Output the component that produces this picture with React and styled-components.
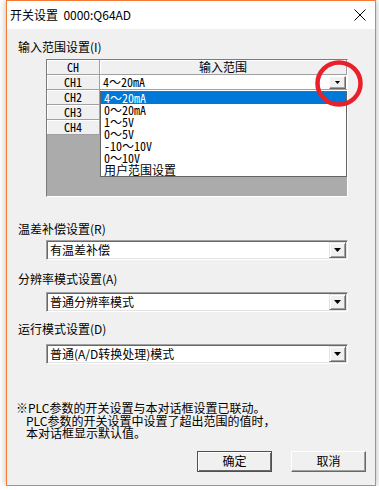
import styled, { createGlobalStyle } from 'styled-components';

const GlobalStyle = createGlobalStyle`
  html, body {
    margin: 0;
    padding: 0;
    background: #ffffff;
  }
  body {
    font-family: 'Noto Sans CJK SC', 'Noto Sans', sans-serif;
    font-size: 12px;
    color: #000;
  }
  * { box-sizing: border-box; }
`;

const Window = styled.div`
  width: 370px;
  height: 486px;
  margin-left: 6px;
  border: 1px solid #f47a35;
  background: #f0f0f0;
  box-shadow: 0 0 7px rgba(0, 0, 0, 0.3);
  display: flex;
  flex-direction: column;
`;

const TitleBar = styled.div`
  height: 28px;
  flex: none;
  background: #ffffff;
  display: flex;
  align-items: center;
  justify-content: space-between;
  padding: 0 9px 0 3px;
`;

const Title = styled.span`
  font-size: 12px;
  line-height: 14px;
  white-space: pre;
`;

const Content = styled.div`
  flex: 1;
  display: flex;
  flex-direction: column;
  padding: 11px 9px 0 11px;
`;

const Label = styled.div`
  font-size: 12px;
  line-height: 14px;
  height: 14px;
  margin-top: ${(p) => p.$mt || 0}px;
  white-space: nowrap;
`;

const GridBox = styled.div`
  position: relative;
  margin: 5px 0 0 28px;
  width: 302px;
  height: 138px;
  border: 1px solid;
  border-color: #7a7a7a #ffffff #ffffff #7a7a7a;
  background: #ababab;
  display: grid;
  grid-template-columns: 53px 247px;
  grid-auto-rows: 15px;
  align-content: start;
  font-family: 'Noto Sans Mono CJK SC', 'Noto Sans CJK SC', monospace;
  font-size: 12px;
`;

const HeadCell = styled.div`
  background: #f0f0f0;
  border-right: 1px solid #a0a0a0;
  border-bottom: 1px solid #a0a0a0;
  box-shadow: inset 1px 1px 0 #ffffff;
  display: flex;
  align-items: center;
  justify-content: center;
  line-height: 14px;
  white-space: nowrap;
`;

const ValueCell = styled.div`
  background: #ffffff;
  border-bottom: 1px solid #a0a0a0;
  display: flex;
  align-items: center;
  padding-left: 3px;
  line-height: 14px;
  white-space: nowrap;
`;

const CellText = styled.span`
  flex: 1;
`;

const SmallDrop = styled.div`
  width: 17px;
  height: 13px;
  margin-right: 1px;
  background: #f0f0f0;
  border: 1px solid;
  border-color: #ffffff #696969 #696969 #ffffff;
  box-shadow: inset -1px -1px 0 #a0a0a0;
  display: flex;
  align-items: center;
  justify-content: center;
`;

const DropList = styled.div`
  position: absolute;
  left: 53px;
  top: 31px;
  width: 247px;
  height: 86px;
  background: #ffffff;
  border: 1px solid #646464;
  display: flex;
  flex-direction: column;
`;

const DropItem = styled.div`
  height: 12px;
  line-height: 12px;
  padding-left: 3px;
  white-space: nowrap;
  background: ${(p) => (p.$active ? '#0078d7' : 'transparent')};
  color: ${(p) => (p.$active ? '#ffffff' : '#000000')};
`;

const Marker = styled.svg`
  position: absolute;
  left: 268px;
  top: 0px;
  pointer-events: none;
`;

const Combo = styled.div`
  margin: ${(p) => p.$mt || 0}px 0 0 28px;
  width: 302px;
  height: 20px;
  background: #ffffff;
  border: 1px solid;
  border-color: #a0a0a0 #ffffff #ffffff #a0a0a0;
  box-shadow: inset 1px 1px 0 #696969, inset -1px -1px 0 #e3e3e3;
  display: flex;
  align-items: center;
  padding: 0 1px 0 3px;
`;

const ComboText = styled.span`
  flex: 1;
  font-size: 12px;
  line-height: 14px;
  white-space: nowrap;
`;

const ArrowButton = styled.div`
  width: 17px;
  height: 16px;
  background: #f0f0f0;
  border: 1px solid;
  border-color: #e3e3e3 #696969 #696969 #e3e3e3;
  box-shadow: inset 1px 1px 0 #ffffff, inset -1px -1px 0 #a0a0a0;
  display: flex;
  align-items: center;
  justify-content: center;
`;

const Note = styled.div`
  margin-top: 38px;
  margin-left: -2px;
  font-size: 12px;
  line-height: 12.5px;
`;

const NoteLine = styled.div`
  padding-left: ${(p) => p.$indent || 0}px;
  white-space: nowrap;
`;

const ButtonRow = styled.div`
  margin-top: 11px;
  display: flex;
  justify-content: flex-end;
  gap: 19px;
`;

const Button = styled.div`
  width: 75px;
  height: 21px;
  background: #f0f0f0;
  border: 1px solid;
  border-color: ${(p) => (p.$default ? '#505050' : '#ffffff #696969 #696969 #ffffff')};
  box-shadow: ${(p) =>
    p.$default
      ? 'inset 1px 1px 0 #ffffff, inset -1px -1px 0 #696969'
      : 'inset -1px -1px 0 #a0a0a0'};
  display: flex;
  align-items: center;
  justify-content: center;
  font-size: 12px;
  line-height: 14px;
`;

const Arrow = () => (
  <svg width="7" height="4" viewBox="0 0 7 4">
    <polygon points="0,0 7,0 3.5,4" fill="#000" />
  </svg>
);

const ranges = ['4～20mA', '0～20mA', '1～5V', '0～5V', '-10～10V', '0～10V', '用户范围设置'];

const App = () => {
  return (
    <>
      <GlobalStyle />
      <Window>
        <TitleBar>
          <Title>{'开关设置  0000:Q64AD'}</Title>
          <svg width="12" height="12" viewBox="0 0 12 12">
            <path d="M0.5 0.5 L11.5 11.5 M11.5 0.5 L0.5 11.5" stroke="#000" strokeWidth="1" />
          </svg>
        </TitleBar>
        <Content>
          <Label>输入范围设置(I)</Label>
          <GridBox>
            <HeadCell>CH</HeadCell>
            <HeadCell>输入范围</HeadCell>
            <HeadCell>CH1</HeadCell>
            <ValueCell>
              <CellText>4～20mA</CellText>
              <SmallDrop>
                <svg width="5" height="3" viewBox="0 0 5 3">
                  <polygon points="0,0 5,0 2.5,3" fill="#000" />
                </svg>
              </SmallDrop>
            </ValueCell>
            <HeadCell>CH2</HeadCell>
            <ValueCell />
            <HeadCell>CH3</HeadCell>
            <ValueCell />
            <HeadCell>CH4</HeadCell>
            <ValueCell />
            <DropList>
              {ranges.map((r, i) => (
                <DropItem key={r} $active={i === 0}>{r}</DropItem>
              ))}
            </DropList>
            <Marker width="48" height="47" viewBox="0 0 48 47">
              <ellipse cx="24" cy="23.5" rx="21.5" ry="21" fill="none" stroke="#e8202a" strokeWidth="4.5" />
            </Marker>
          </GridBox>

          <Label $mt={25}>温差补偿设置(R)</Label>
          <Combo $mt={4}>
            <ComboText>有温差补偿</ComboText>
            <ArrowButton><Arrow /></ArrowButton>
          </Combo>

          <Label $mt={12}>分辨率模式设置(A)</Label>
          <Combo $mt={6}>
            <ComboText>普通分辨率模式</ComboText>
            <ArrowButton><Arrow /></ArrowButton>
          </Combo>

          <Label $mt={10}>运行模式设置(D)</Label>
          <Combo $mt={8}>
            <ComboText>普通(A/D转换处理)模式</ComboText>
            <ArrowButton><Arrow /></ArrowButton>
          </Combo>

          <Note>
            <NoteLine>※PLC参数的开关设置与本对话框设置已联动。</NoteLine>
            <NoteLine $indent={10}>PLC参数的开关设置中设置了超出范围的值时，</NoteLine>
            <NoteLine $indent={10}>本对话框显示默认值。</NoteLine>
          </Note>

          <ButtonRow>
            <Button $default>确定</Button>
            <Button>取消</Button>
          </ButtonRow>
        </Content>
      </Window>
    </>
  );
};

export default App;
